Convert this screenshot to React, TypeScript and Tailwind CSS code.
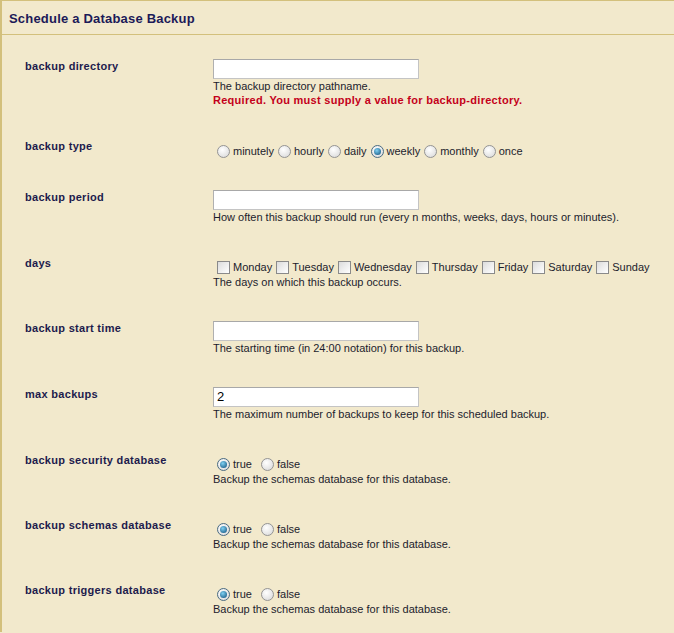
import React from "react";

/* ------------------------------------------------------------------ */
/*  Small form controls drawn to look like the classic XP widgets      */
/* ------------------------------------------------------------------ */

function Radio({ checked = false }: { checked?: boolean }) {
  return (
    <span
      className={`inline-flex items-center justify-center w-[13px] h-[13px] rounded-full border shrink-0 bg-[radial-gradient(circle_at_40%_35%,#ffffff,#d6d6d6)] ${
        checked ? "border-[#4a6b82]" : "border-[#949494]"
      }`}
    >
      {checked && (
        <span className="block w-[7px] h-[7px] rounded-full bg-[radial-gradient(circle_at_40%_35%,#7fd0f2,#0c4c78)]" />
      )}
    </span>
  );
}

function Checkbox() {
  return (
    <span className="inline-block w-[13px] h-[13px] border border-[#8a8a8a] shrink-0 bg-[linear-gradient(135deg,#dcdcdc,#ffffff)]" />
  );
}

function TextInput({ value = "" }: { value?: string }) {
  return (
    <div className="w-[206px] h-[20px] bg-white border border-[#c4c4c4] border-t-[#a8a8a8] border-l-[#b0b0b0] pl-[3px] flex items-center text-[13px] text-black">
      {value}
    </div>
  );
}

function Help({ children }: { children: React.ReactNode }) {
  return <p className="text-[11px] leading-[14px] text-[#1c1c2c]">{children}</p>;
}

/* ------------------------------------------------------------------ */
/*  Row                                                                */
/* ------------------------------------------------------------------ */

function Row({ label, children }: { label: string; children: React.ReactNode }) {
  return (
    <div className="flex items-start pt-[16px] pb-[16px]">
      <div className="w-[188px] shrink-0 pt-[1px] text-[11px] leading-[13px] font-bold tracking-[0.3px] text-[#1d1b4c]">
        {label}
      </div>
      <div className="flex-1">{children}</div>
    </div>
  );
}

function RadioLine({
  options,
  selected,
  gap,
  top = "pt-[4px]",
}: {
  options: string[];
  selected: string;
  gap: string;
  top?: string;
}) {
  return (
    <div className={`flex items-center h-[19px] ${top} text-[11px] text-[#1c1c2c]`}>
      {options.map((o, i) => (
        <span
          key={o}
          className={`inline-flex items-center ${i === 0 ? "ml-[4px]" : gap}`}
        >
          <Radio checked={o === selected} />
          <span className="ml-[3px]">{o}</span>
        </span>
      ))}
    </div>
  );
}

const days = ["Monday", "Tuesday", "Wednesday", "Thursday", "Friday", "Saturday", "Sunday"];

/* ------------------------------------------------------------------ */
/*  Page                                                               */
/* ------------------------------------------------------------------ */

export default function App() {
  return (
    <div className="min-h-screen bg-[#f2e9cc] font-['Liberation_Sans',Arial,sans-serif]">
      <div className="border-l-2 border-t border-[#d3c07c]">
        {/* header */}
        <div className="h-[34px] border-b border-[#d3c07c] flex items-center pl-[7px] pt-[2px]">
          <h1 className="text-[13px] font-bold tracking-[0.2px] text-[#1c1a58]">
            Schedule a Database Backup
          </h1>
        </div>

        {/* form rows */}
        <div className="pt-[8px] pl-[23px]">
          <Row label="backup directory">
            <TextInput />
            <Help>The backup directory pathname.</Help>
            <p className="text-[11px] leading-[14px] font-bold tracking-[0.28px] text-[#c4001a]">
              Required. You must supply a value for backup-directory.
            </p>
          </Row>

          <Row label="backup type">
            <RadioLine
              options={["minutely", "hourly", "daily", "weekly", "monthly", "once"]}
              selected="weekly"
              gap="ml-[4px]"
              top="pt-[5px]"
            />
          </Row>

          <Row label="backup period">
            <TextInput />
            <Help>
              How often this backup should run (every n months, weeks, days, hours or minutes).
            </Help>
          </Row>

          <Row label="days">
            <div className="flex items-center h-[19px] pt-[4px] text-[11px] text-[#1c1c2c]">
              {days.map((d, i) => (
                <span key={d} className={`inline-flex items-center ${i === 0 ? "ml-[4px]" : "ml-[4px]"}`}>
                  <Checkbox />
                  <span className="ml-[3px]">{d}</span>
                </span>
              ))}
            </div>
            <Help>The days on which this backup occurs.</Help>
          </Row>

          <Row label="backup start time">
            <TextInput />
            <Help>The starting time (in 24:00 notation) for this backup.</Help>
          </Row>

          <Row label="max backups">
            <TextInput value="2" />
            <Help>The maximum number of backups to keep for this scheduled backup.</Help>
          </Row>

          <Row label="backup security database">
            <RadioLine options={["true", "false"]} selected="true" gap="ml-[9px]" />
            <Help>Backup the schemas database for this database.</Help>
          </Row>

          <Row label="backup schemas database">
            <RadioLine options={["true", "false"]} selected="true" gap="ml-[9px]" />
            <Help>Backup the schemas database for this database.</Help>
          </Row>

          <Row label="backup triggers database">
            <RadioLine options={["true", "false"]} selected="true" gap="ml-[9px]" />
            <Help>Backup the schemas database for this database.</Help>
          </Row>
        </div>
      </div>
    </div>
  );
}
